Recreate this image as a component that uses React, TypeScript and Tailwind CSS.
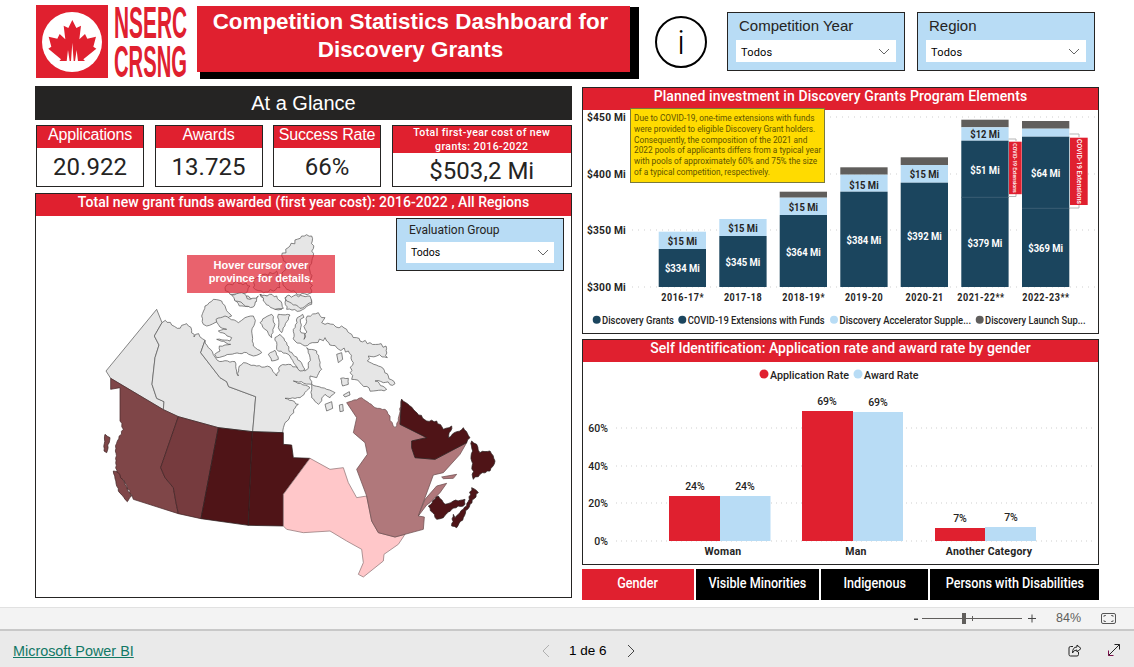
import React from "react";

const RED = "#e0202f";
const NAVY = "#1b455e";
const BLUE = "#b8dcf5";
const GRAY = "#605e5c";

function Logo() {
  return (
    <svg width="152" height="74" viewBox="0 0 152 74" className="ml-[36px] mt-[5px] shrink-0">
      <rect x="0" y="0" width="72" height="73" fill={RED} />
      <circle cx="36" cy="37" r="30" fill="#fff" />
      <g transform="translate(-6 -5) scale(0.3333)">
        <path
          d="M127 60 L139 84 L153 77 L148 118 L165 102 L172 116 L198 110 L190 140 L199 146 L160 178 L165 183 L88 183 L93 178 L55 146 L64 140 L56 110 L82 116 L89 102 L106 118 L101 77 L115 84 Z"
          fill={RED}
        />
        <path d="M110 184 L114 150 L119 184 Z M123 184 L127 128 L131 184 Z M135 184 L140 150 L144 184 Z" fill="#fff" />
      </g>
      <text transform="translate(78 33) scale(0.4635 1)" fontFamily="Liberation Sans" fontWeight="700" fontSize="45" fill={RED}>NSERC</text>
      <text transform="translate(78 72) scale(0.449 1)" fontFamily="Liberation Sans" fontWeight="700" fontSize="45" fill={RED}>CRSNG</text>
    </svg>
  );
}

function Chevron() {
  return (
    <svg width="12" height="7" viewBox="0 0 12 7" className="shrink-0">
      <path d="M1 1 L6 6 L11 1" fill="none" stroke="#555" strokeWidth="0.9" />
    </svg>
  );
}

function Slicer({ label, className }: { label: string; className: string }) {
  return (
    <div className={`w-[178px] h-[59px] bg-[#b8dcf5] border border-[#252423] px-[8px] flex flex-col shrink-0 ${className}`}>
      <div className="font-[family-name:'Liberation_Sans',sans-serif] text-[15px] leading-[18px] text-[#252423] mt-[4px] ml-[3px]">{label}</div>
      <div className="mt-[5px] h-[22px] bg-white flex items-center justify-between pl-[5px] pr-[6px]">
        <span className="font-[family-name:Roboto,sans-serif] text-[11px] leading-[11px] pt-[2px] text-black tracking-[0.2px]">Todos</span>
        <Chevron />
      </div>
    </div>
  );
}

function Kpi({ title, value }: { title: string; value: string }) {
  return (
    <div className="w-[108px] h-[62px] border border-[#252423] flex flex-col bg-white">
      <div className="h-[22px] bg-[#e0202f] text-white text-center font-[family-name:'Liberation_Sans',sans-serif] text-[16px] leading-[17px] tracking-[-0.2px]">{title}</div>
      <div className="flex-1 flex items-center justify-center font-[family-name:Roboto,sans-serif] text-[24px] text-[#252423]">{value}</div>
    </div>
  );
}

function PanelTitle({ children }: { children: React.ReactNode }) {
  return (
    <div className="h-[22px] bg-[#e0202f] text-white text-center font-[family-name:Roboto,sans-serif] font-medium text-[14px] leading-[17px] tracking-[0.04px] shrink-0">
      {children}
    </div>
  );
}

function rough(chain: string, amp: number, step = 7) {
  const nums = chain.trim().split(/\s+/).map((p) => p.split(",").map(Number));
  const out: string[] = [];
  let seed = nums[0][0] * 0.37 + nums[0][1] * 0.11;
  for (let i = 0; i < nums.length - 1; i++) {
    const [x1, y1] = nums[i];
    const [x2, y2] = nums[i + 1];
    const len = Math.hypot(x2 - x1, y2 - y1);
    const n = Math.max(1, Math.floor(len / step));
    const nx = -(y2 - y1) / (len || 1);
    const ny = (x2 - x1) / (len || 1);
    out.push(`${x1},${y1}`);
    for (let k = 1; k < n; k++) {
      seed += 1.7;
      const r = Math.sin(seed * 12.9898) * 43758.5453;
      const f = (r - Math.floor(r) - 0.5) * 2 * amp;
      const t = k / n;
      out.push(`${(x1 + (x2 - x1) * t + nx * f).toFixed(1)},${(y1 + (y2 - y1) * t + ny * f).toFixed(1)}`);
    }
  }
  const last = nums[nums.length - 1];
  out.push(`${last[0]},${last[1]}`);
  return out.join(" ");
}

const P = (props: { points?: string; r?: string; amp?: number; fill?: string; stroke?: string }) => (
  <polygon
    points={`${props.r ? rough(props.r, props.amp ?? 4) : ""} ${props.points ?? ""}`}
    fill={props.fill ?? "#e6e6e6"}
    stroke={props.stroke ?? "#5a5a5a"}
    strokeWidth="2.2"
    strokeLinejoin="round"
  />
);

function CanadaMap() {
  return (
    <svg width="406" height="370" viewBox="0 0 1218 1110" className="ml-[54px] mt-[5px] block">
      {/* Territories */}
      <P points="48,450 200,265 216,305 193,345 207,372 195,410 186,490 200,532 222,542 220,566 62,472" />
      <P r="216,305 226,298 245,312 262,322 290,308 305,328 312,348 326,338 345,358" amp={4} points="332,395 390,470 410,482 416,497 497,527 488,632 385,620 265,587 220,566 222,542 200,532 186,490 195,410 207,372 193,345" />
      <P r="345,358 355,380 375,408 382,418 435,422 440,450 445,465 448,435 460,425 500,435 540,438 560,465 570,435 595,430 645,450 655,442 660,410 650,380 680,390 695,445 680,470 660,465 665,490 610,480 660,500 630,530 585,532 625,550 605,580 585,605 578,635" amp={3} points="488,632 497,527 416,497 410,482 390,470 332,395" />
      {/* Arctic islands */}
      <P r="335,285 345,255 370,235 395,240 415,275 425,285 375,305 350,315 340,310 335,285" amp={2} />
      <g transform="translate(360 210)">
        <P r="18,85 45,75 85,95 95,88 105,80 130,75 136,88 125,120 130,165 155,185 130,195 110,185 60,190 20,200 14,190 30,180 28,165 62,160 20,145 60,150 65,140 25,120 50,115 30,108 18,85" amp={2} />
        <P r="250,115 262,80 278,70 272,110 285,135 282,145 290,92 292,75 325,65 345,80 335,95 345,100 370,100 378,108 395,105 410,115 425,130 440,140 450,150 480,155 505,160 528,165 532,200 500,195 475,195 472,210 505,225 535,255 555,278 520,275 495,270 530,295 490,300 450,275 425,265 420,245 430,215 415,180 380,170 350,150 345,140 315,155 285,165 255,150 250,115" amp={6} />
        <P r="392,262 415,262 415,280 398,285 392,262" amp={1.5} />
        <P points="380,190 395,185 398,205 385,215" />
        <P r="72,25 115,15 140,30 120,45 88,45 72,25" amp={3} />
        <P r="150,10 170,15 200,35 215,55 195,55 170,30 150,10" amp={3} />
        <P r="225,20 300,20 305,40 270,60 230,55 225,20" amp={3} />
        <P r="150,95 165,80 185,70 195,100 185,140 165,115 150,95" amp={3} />
        <P r="205,70 240,72 215,125 205,110 205,70" amp={2} />
        <P r="195,140 210,130 230,155 238,182 270,210 285,235 270,240 240,195 200,175 195,140" amp={3} />
        <P r="175,190 195,178 205,205 185,210 175,190" amp={2} />
        <P r="305,280 350,295 375,305 360,320 345,310 325,340 305,320 305,280" amp={2.5} />
        <P points="345,340 365,332 368,352 350,360" />
        <P points="388,342 398,340 400,360 390,362" />
        <P points="400,312 418,302 420,312 405,318" />
      </g>
      <P r="575,105 600,75 635,45 665,45 670,105 660,150 665,215 630,222 590,205 570,170 590,130 575,105" amp={5} />
      <P r="405,200 440,180 480,195 470,215 420,220 405,200" amp={5} />
      <P r="500,170 560,150 570,200 520,215 490,200 500,170" amp={5} />
      <P r="425,222 455,215 480,235 505,225 490,258 460,250 435,240 425,222" amp={4} />
      <P r="510,220 560,225 580,262 555,265 520,240 510,220" amp={4} />
      <P r="590,225 660,225 665,245 630,262 590,240 590,225" amp={4} />
      {/* West */}
      <P fill="#7f4648" stroke="#4a2a2c" r="130,835 108,790 80,755 76,690 82,660 100,625 90,600" amp={3} points="90,500 62,505 62,472 220,566 265,587 212,740 225,770 250,800 258,845 265,878" />
      <P fill="#763b3e" stroke="#3f2325" points="265,587 385,620 333,893 265,878 258,845 250,800 225,770 212,740" />
      <P fill="#4f1417" stroke="#2c2020" points="385,620 487,632 475,913 333,893" />
      <P fill="#4f1417" stroke="#2c2020" points="487,632 580,635 580,670 605,672 610,710 660,712 580,820 580,915 475,913" />
      <P fill="#7f4648" stroke="#3f2325" r="70,750 85,755 105,790 125,825 112,842 85,810 70,750" amp={2} />
      <P fill="#7f4648" stroke="#3f2325" r="45,640 60,650 50,695 42,690 45,640" amp={2} />
      {/* Ontario */}
      <P fill="#ffc7c9" stroke="#8f7476" points="660,712 720,745 760,740 775,785 800,830 830,825 845,900 865,935 915,948 945,940 925,970 882,1000 880,1020 820,1068 805,1060 820,1025 815,985 770,960 720,930 640,935 590,925 580,915 580,820" />
      {/* Quebec */}
      <P fill="#b0787b" stroke="#6c4e50" r="770,545 815,530 855,560 885,565 900,585 900,598 915,620 925,600 935,535" amp={2} points="930,610 1010,650 965,660 965,680 975,710 1035,715 1130,665 1110,700 1060,755 1030,762 1005,830 985,885 1003,888 1000,925 915,948 865,935 845,900 830,825 800,745 832,700 825,665 790,635 800,590" />
      <P fill="#b0787b" stroke="#6c4e50" points="1005,835 1040,795 1070,787 1050,815 1020,845 1010,852 985,885" />
      <P fill="#b0787b" stroke="#6c4e50" points="1055,768 1100,760 1090,772 1060,773" />
      {/* Atlantic */}
      <P fill="#4f1417" stroke="#2c2020" r="935,535 970,565 1010,600 1040,600 1060,625 1085,615 1075,650 1120,620 1140,650 1130,665" amp={3} points="1035,715 975,710 965,680 965,660 1010,650 930,610" />
      <P fill="#4f1417" stroke="#2c2020" r="1145,660 1160,670 1170,695 1200,690 1215,720 1200,750 1170,760 1150,775 1145,720 1145,660" amp={3} />
      <P fill="#4f1417" stroke="#2c2020" r="1015,855 1045,825 1065,850 1090,840 1125,835 1125,850 1085,865 1060,890 1040,895 1015,855" amp={3} />
      <P fill="#4f1417" stroke="#2c2020" r="1095,890 1130,855 1145,800 1165,815 1140,850 1120,890 1100,920 1085,915 1090,880 1095,890" amp={3} />
    </svg>
  );
}

const T = ({ x, y, children, anchor = "middle", size = 11, weight = 700, fill = "#252423", ls = 0, len, sx }: {
  x: number; y: number; children: React.ReactNode; anchor?: "start" | "middle" | "end"; size?: number; weight?: number; fill?: string; ls?: number; len?: number; sx?: number;
}) => (
  <text
    x={sx ? 0 : x}
    y={sx ? 0 : y}
    transform={sx ? `translate(${x} ${y}) scale(${sx} 1)` : undefined}
    textAnchor={anchor}
    dominantBaseline="central"
    fontFamily="Roboto, sans-serif"
    fontSize={size}
    fontWeight={weight}
    fill={fill}
    letterSpacing={ls}
    textLength={len}
    lengthAdjust={len ? "spacingAndGlyphs" : undefined}
  >
    {children}
  </text>
);

const investBars = [
  { x: 658.7, navy: 249, light: 231.7, gray: null, l1: ["$15 Mi", 241.7], l2: ["$334 Mi", 268] },
  { x: 719.3, navy: 236, light: 219, gray: null, l1: ["$15 Mi", 228], l2: ["$345 Mi", 262] },
  { x: 779.7, navy: 215, light: 197.7, gray: 191.7, l1: ["$15 Mi", 207], l2: ["$364 Mi", 252] },
  { x: 840.3, navy: 191.7, light: 174.7, gray: 167.3, l1: ["$15 Mi", 185], l2: ["$384 Mi", 240] },
  { x: 900.7, navy: 182.7, light: 165, gray: 157.3, l1: ["$15 Mi", 174], l2: ["$392 Mi", 236] },
  { x: 961.3, navy: 140.7, light: 127.3, gray: 119.7, l1: ["$12 Mi", 134], l2: ["$379 Mi", 243], l3: ["$51 Mi", 170], split: 197.3 },
  { x: 1022, navy: 136.7, light: 128.7, gray: 121, l2: ["$369 Mi", 248], l3: ["$64 Mi", 173], split: 208.3 },
] as const;

function InvestChart() {
  const w = 47.3;
  return (
    <svg width="514" height="223" viewBox="583 110 514 223" className="block">
      {[117, 174, 230, 287].map((y) => (
        <line key={y} x1="632" x2="1095" y1={y} y2={y} stroke="#cfcfcf" strokeDasharray="1 5" />
      ))}
      {[["$450 Mi", 117], ["$400 Mi", 174], ["$350 Mi", 230], ["$300 Mi", 287]].map(([t, y]) => (
        <T key={t as string} x={587} y={y as number} anchor="start" size={11.5} ls={0.2} sx={0.89}>{t}</T>
      ))}
      {investBars.map((b) => (
        <g key={b.x}>
          {b.gray !== null && <rect x={b.x} y={b.gray} width={w} height={b.light - b.gray} fill={GRAY} />}
          <rect x={b.x} y={b.light} width={w} height={b.navy - b.light} fill={BLUE} />
          <rect x={b.x} y={b.navy} width={w} height={287 - b.navy} fill={NAVY} />
          {"split" in b && <line x1={b.x} x2={b.x + w} y1={b.split} y2={b.split} stroke="#3b5d73" />}
          {"l1" in b && <T x={b.x + w / 2} y={b.l1[1]} fill="#252423" size={11} sx={0.86}>{b.l1[0]}</T>}
          <T x={b.x + w / 2} y={b.l2[1]} fill="#fff" size={11} sx={0.86}>{b.l2[0]}</T>
          {"l3" in b && <T x={b.x + w / 2} y={b.l3[1]} fill="#fff" size={11} sx={0.86}>{b.l3[0]}</T>}
        </g>
      ))}
      {/* COVID brackets */}
      <path d="M1008.5 139 H1016 V141 M1008.5 196.5 H1016 V194" fill="none" stroke="#b5b5b5" />
      <rect x="1009" y="141.7" width="12.7" height="52.5" fill={RED} />
      <text transform="translate(1013.4 168) rotate(90)" textAnchor="middle" fontFamily="Roboto, sans-serif" fontSize="5.2" fontWeight="500" fill="#fff">COVID-19 Extensions</text>
      <path d="M1069.5 134 H1079 V137 M1069.5 208 H1079 V205" fill="none" stroke="#b5b5b5" />
      <rect x="1070" y="137.7" width="17.7" height="67.3" fill={RED} />
      <text transform="translate(1076.5 171.5) rotate(90)" textAnchor="middle" fontFamily="Roboto, sans-serif" fontSize="6.8" fontWeight="500" fill="#fff">COVID-19 Extensions</text>
      {[["2016-17*", 682.7], ["2017-18", 743], ["2018-19*", 803.7], ["2019-20", 864], ["2020-21", 924.7], ["2021-22**", 981], ["2022-23**", 1046]].map(([t, x]) => (
        <T key={t as string} x={x as number} y={297} size={10.5} ls={0.6} sx={0.86}>{t}</T>
      ))}
      <circle cx="596.7" cy="319.7" r="4" fill={NAVY} />
      <T x={602} y={320} anchor="start" size={10.5} weight={500} len={72}>Discovery Grants</T>
      <circle cx="682.3" cy="319.7" r="4" fill={NAVY} />
      <T x={687.7} y={320} anchor="start" size={10.5} weight={500} len={137}>COVID-19 Extensions with Funds</T>
      <circle cx="834" cy="319.7" r="4" fill={BLUE} />
      <T x={839.5} y={320} anchor="start" size={10.5} weight={500} len={131.5}>Discovery Accelerator Supple...</T>
      <circle cx="979.7" cy="319.7" r="4" fill={GRAY} />
      <T x={985} y={320} anchor="start" size={10.5} weight={500} len={100.5}>Discovery Launch Sup...</T>
    </svg>
  );
}

function GenderChart() {
  const bars = [
    { x: 669, w: 51, y: 496, f: RED }, { x: 720, w: 50.5, y: 496, f: BLUE },
    { x: 802, w: 51, y: 411, f: RED }, { x: 853, w: 50, y: 412, f: BLUE },
    { x: 935, w: 50, y: 528, f: RED }, { x: 985, w: 51, y: 527, f: BLUE },
  ];
  const labels: [string, number, number][] = [
    ["24%", 695, 486], ["24%", 745, 486], ["69%", 827, 401], ["69%", 878, 402], ["7%", 960, 518], ["7%", 1011, 517],
  ];
  return (
    <svg width="514" height="203" viewBox="583 362 514 203" className="block">
      <circle cx="764" cy="374" r="4.5" fill={RED} />
      <T x={770} y={375} anchor="start" size={10.5} weight={500} len={79}>Application Rate</T>
      <circle cx="858" cy="374" r="4.5" fill={BLUE} />
      <T x={864} y={375} anchor="start" size={10.5} weight={500} len={54.5}>Award Rate</T>
      {[["60%", 428], ["40%", 466], ["20%", 503], ["0%", 541]].map(([t, y]) => (
        <g key={t as string}>
          <line x1="616" x2="1093" y1={y as number} y2={y as number} stroke="#cfcfcf" strokeDasharray="1 4" />
          <T x={608} y={y as number} anchor="end" size={10.5} weight={500}>{t}</T>
        </g>
      ))}
      {bars.map((b) => (
        <rect key={b.x} x={b.x} y={b.y} width={b.w} height={541 - b.y} fill={b.f} />
      ))}
      {labels.map(([t, x, y]) => (
        <T key={x} x={x} y={y} size={10.5} weight={500}>{t}</T>
      ))}
      <T x={723} y={551} size={10.5} ls={0.25}>Woman</T>
      <T x={856} y={551} size={10.5} ls={0.25}>Man</T>
      <T x={989} y={551} size={10.5} ls={0.2}>Another Category</T>
    </svg>
  );
}

const Tab = ({ label, className }: { label: string; className: string }) => (
  <div className={`h-[31px] flex items-center justify-center text-white font-[family-name:Roboto,sans-serif] pb-[2px] ${className}`}>
    <span className="inline-block whitespace-nowrap text-[14px] font-medium scale-x-90">{label}</span>
  </div>
);

export default function App() {
  return (
    <div className="w-[1134px] h-[667px] flex flex-col bg-white overflow-hidden">
      <div className="h-[607px] shrink-0">
        <header className="flex items-start h-[86px]">
          <Logo />
          <div className="ml-[9px] mt-[6px] w-[433px] h-[66px] bg-[#e0202f] shadow-[6px_4px_0_3px_#000] text-white text-center font-[family-name:'Liberation_Sans',sans-serif] font-bold text-[22.4px] leading-[28px] pt-[2px] pr-[6px] shrink-0">
            Competition Statistics Dashboard for
            <br />
            Discovery Grants
          </div>
          <div className="ml-[25px] mt-[16px] w-[52px] h-[52px] rounded-full border-[2px] border-black flex items-center justify-center shrink-0 font-[family-name:Roboto,sans-serif] text-[34px] font-light text-black">
            i
          </div>
          <Slicer label="Competition Year" className="ml-[20px] mt-[12px]" />
          <Slicer label="Region" className="ml-[12px] mt-[12px]" />
        </header>
        <div className="flex items-start">
          <section className="ml-[35px] w-[537px] shrink-0">
            <div className="h-[34px] bg-[#252423] text-white text-center font-[family-name:'Liberation_Sans',sans-serif] text-[20px] leading-[34px]">At a Glance</div>
            <div className="flex gap-[10.5px] ml-[1px] mt-[5px]">
              <Kpi title="Applications" value="20.922" />
              <Kpi title="Awards" value="13.725" />
              <Kpi title="Success Rate" value="66%" />
              <div className="flex-1 h-[62px] border border-[#252423] flex flex-col">
                <div className="h-[31px] bg-[#e0202f] text-white text-center font-[family-name:Roboto,sans-serif] font-medium text-[10.5px] leading-[13.5px] tracking-[0.4px]">
                  Total first-year cost of new
                  <br />
                  grants: 2016-2022
                </div>
                <div className="flex-1 flex items-center justify-center font-[family-name:Roboto,sans-serif] text-[24px] text-[#252423]">$503,2 Mi</div>
              </div>
            </div>
            <div className="relative mt-[6px] h-[405px] border border-[#252423]">
              <PanelTitle>Total new grant funds awarded (first year cost): 2016-2022 , All Regions</PanelTitle>
              <CanadaMap />
              <div className="absolute left-[151px] top-[61px] w-[148px] h-[38px] bg-[#e0202f]/70 text-white text-center font-[family-name:'Liberation_Sans',sans-serif] font-bold text-[11px] leading-[13px] pt-[4px]">
                Hover cursor over
                <br />
                province for details.
              </div>
              <div className="absolute left-[360px] top-[24px] w-[168px] h-[53px] bg-[#b8dcf5] border border-[#252423] px-[9px]">
                <div className="font-[family-name:Roboto,sans-serif] text-[12px] leading-[16px] mt-[3px] ml-[3px] text-[#252423]">Evaluation Group</div>
                <div className="mt-[4px] h-[21px] bg-white flex items-center justify-between px-[5px]">
                  <span className="font-[family-name:Roboto,sans-serif] text-[10.5px] text-black">Todos</span>
                  <Chevron />
                </div>
              </div>
            </div>
          </section>
          <section className="ml-[10px] w-[517px] mt-[1px] shrink-0">
            <div className="relative h-[247px] border border-[#252423]">
              <PanelTitle><span className="tracking-[0.1px]">Planned investment in Discovery Grants Program Elements</span></PanelTitle>
              <InvestChart />
              <div className="absolute left-[47px] top-[20px] w-[195px] h-[75px] bg-[#ffdb00] border border-[#7a7a3c] pl-[3px] pt-[4px] font-[family-name:Roboto,sans-serif] text-[8.3px] leading-[10.8px] text-[#5e5300] whitespace-nowrap">
                Due to COVID-19, one-time extensions with funds
                <br />
                were provided to eligible Discovery Grant holders.
                <br />
                Consequently, the composition of the 2021 and
                <br />
                2022 pools of applicants differs from a typical year
                <br />
                with pools of approximately 60% and 75% the size
                <br />
                of a typical competition, respectively.
              </div>
            </div>
            <div className="mt-[5px] h-[226px] border border-[#252423]">
              <PanelTitle>Self Identification: Application rate and award rate by gender</PanelTitle>
              <GenderChart />
            </div>
            <div className="flex gap-[2px] mt-[4px] w-[517px]">
              <Tab label="Gender" className="w-[112px] bg-[#e0202f]" />
              <Tab label="Visible Minorities" className="w-[123px] bg-black" />
              <Tab label="Indigenous" className="w-[107px] bg-black" />
              <Tab label="Persons with Disabilities" className="flex-1 bg-black" />
            </div>
          </section>
        </div>
      </div>
      <div className="h-[24px] bg-[#f3f3f3] border-t border-[#e1e1e1] border-b-2 border-b-[#c8c8c8] flex items-center justify-end shrink-0">
        <svg width="124" height="14" viewBox="0 0 124 14" className="mr-[18px] mt-[1px]">
          <rect x="0" y="6.5" width="4" height="1.5" fill="#444" />
          <rect x="8" y="6" width="100" height="1" fill="#605e5c" />
          <rect x="48" y="1" width="4" height="11" fill="#605e5c" />
          <rect x="58" y="4" width="1" height="5" fill="#605e5c" />
          <path d="M114 6.5 H122 M118 2.5 V10.5" stroke="#444" strokeWidth="1" />
        </svg>
        <span className="font-[family-name:'Liberation_Sans',sans-serif] text-[12.5px] text-[#605e5c] w-[22px] mr-[23px]">84%</span>
        <svg width="15" height="11" viewBox="0 0 15 11" className="mr-[18px]">
          <rect x="0.5" y="0.5" width="14" height="10" rx="1.5" fill="none" stroke="#555" />
          <path d="M3 4 V2.5 H5 M10 2.5 H12 V4 M3 7 V8.5 H5 M10 8.5 H12 V7" fill="none" stroke="#555" strokeWidth="0.8" />
        </svg>
      </div>
      <footer className="flex-1 bg-[#eaeaea] flex items-center relative pt-[2px]">
        <span className="ml-[13px] mt-[3px] font-[family-name:'Liberation_Sans',sans-serif] text-[14.4px] text-[#117865] underline">Microsoft Power BI</span>
        <div className="absolute left-[541px] top-[10px] flex items-center h-[20px]">
          <svg width="10" height="14" viewBox="0 0 10 14"><path d="M8 1 L2 7 L8 13" fill="none" stroke="#b0b0b0" strokeWidth="1" /></svg>
          <span className="ml-[18px] font-[family-name:'Liberation_Sans',sans-serif] font-medium text-[13.5px] text-black">1 de 6</span>
          <svg width="10" height="14" viewBox="0 0 10 14" className="ml-[19px]"><path d="M2 1 L8 7 L2 13" fill="none" stroke="#444" strokeWidth="1" /></svg>
        </div>
        <div className="ml-auto flex items-center mr-[13px]">
          <svg width="14" height="13" viewBox="0 0 14 13">
            <path d="M5 2.5 H2.5 Q1 2.5 1 4 V10.5 Q1 12 2.5 12 H9 Q10.5 12 10.5 10.5 V8" fill="none" stroke="#222" strokeWidth="1" />
            <path d="M9 1 L13 4.5 L9 8 V6 Q5.5 6 4.5 9 Q4.5 3 9 3 Z" fill="none" stroke="#222" strokeWidth="1" />
          </svg>
          <svg width="14" height="14" viewBox="0 0 14 14" className="ml-[25px]">
            <path d="M1.5 12.5 L12.5 1.5 M7.5 1.5 H12.5 V6.5" fill="none" stroke="#222" strokeWidth="1" />
            <path d="M1.5 7.5 V12.5 H6.5" fill="none" stroke="#7a0f4a" strokeWidth="1" />
          </svg>
        </div>
      </footer>
    </div>
  );
}
